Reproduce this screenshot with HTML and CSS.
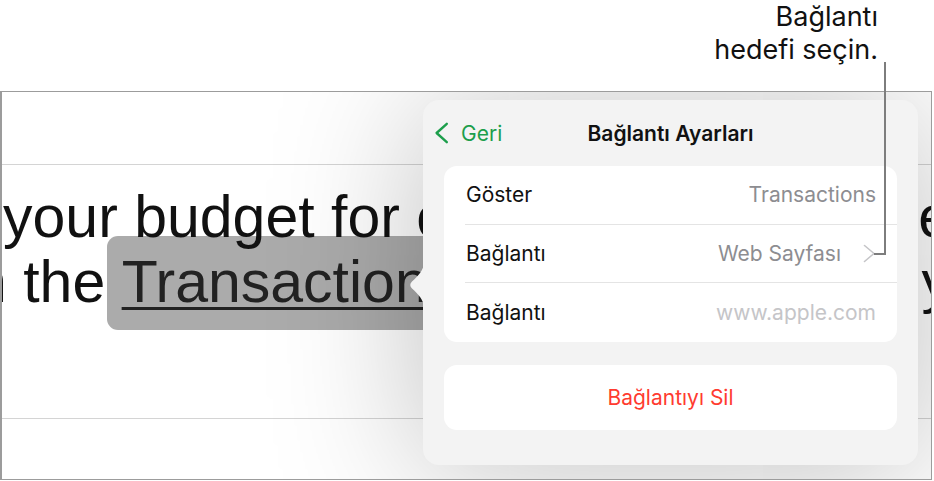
FILE: index.html
```html
<!DOCTYPE html>
<html lang="tr">
<head>
<meta charset="utf-8">
<title>Bağlantı Ayarları</title>
<link rel="stylesheet" href="styles.css">
</head>
<body>
<div class="callout">Bağlantı<br>hedefi seçin.</div>
<div class="leader"></div>
<div class="frame">
  <div class="toolbar"></div>
  <div class="doc">
    <div class="line line-one">
      <span class="left">your budget for c</span>
      <span class="right">e</span>
    </div>
    <div class="line line-two">
      <span class="left"><span class="cut">n</span> the <span class="sel"><span class="link">Transactions</span></span></span>
      <span class="right">y</span>
    </div>
  </div>
  <div class="spacer"></div>
  <div class="footer"></div>

  <div class="popover">
    <svg class="notch" width="16" height="46" viewBox="0 0 16 46"><path d="M16 0 C16 8 10 14 4 19.5 Q0.5 23 4 26.5 C10 32 16 38 16 46 Z" fill="#f3f3f3"/></svg>
    <div class="pop-head">
      <div class="back">
        <svg width="15" height="22" viewBox="0 0 15 22"><path d="M12.8 1.8 L2.6 11 L12.8 20.2" fill="none" stroke="#1c9e4b" stroke-width="2.4" stroke-linecap="round" stroke-linejoin="round"/></svg>
        <span>Geri</span>
      </div>
      <div class="title">Bağlantı Ayarları</div>
      <div></div>
    </div>
    <div class="card">
      <div class="row"><span class="label">Göster</span><span class="value">Transactions</span></div>
      <div class="row"><span class="label">Bağlantı</span><span class="value">Web Sayfası<svg class="chev" width="13" height="19" viewBox="0 0 13 19"><path d="M1.5 1.5 L11 9.5 L1.5 17.5" fill="none" stroke="#c5c5c8" stroke-width="1.6" stroke-linecap="round" stroke-linejoin="round"/></svg></span></div>
      <div class="row"><span class="label">Bağlantı</span><span class="value placeholder">www.apple.com</span></div>
    </div>
    <div class="card delete">Bağlantıyı Sil</div>
  </div>
</div>
</body>
</html>
```
FILE: styles.css
```css
html, body {
  margin: 0;
  padding: 0;
}
body {
  width: 934px;
  height: 481px;
  overflow: hidden;
  background: #ffffff;
  position: relative;
  font-family: "Inter", "Noto Sans", sans-serif;
}
.callout {
  height: 91px;
  box-sizing: border-box;
  padding: 0 56px 0 0;
  text-align: right;
  font-size: 27px;
  line-height: 33px;
  color: #111;
}
.leader {
  position: absolute;
  left: 874px;
  top: 62px;
  width: 10px;
  height: 191px;
  border-right: 2px solid #7d7d7d;
  border-bottom: 2px solid #7d7d7d;
  z-index: 5;
}
.frame {
  position: relative;
  width: 932px;
  height: 389px;
  box-sizing: border-box;
  border: 1px solid #9c9c9c;
  border-left-width: 2px;
  overflow: hidden;
  display: flex;
  flex-direction: column;
  background: #fff;
}
.toolbar {
  height: 73px;
  flex: none;
  box-sizing: border-box;
  border-bottom: 1px solid #d4d4d4;
}
.doc {
  margin-top: 20px;
  font-family: "Liberation Sans", Arial, sans-serif;
  font-size: 59px;
  line-height: 65px;
  color: #111;
}
.line {
  display: flex;
  justify-content: space-between;
  white-space: nowrap;
}
.line-one {
  position: relative;
  z-index: 1;
}
.line-one .left {
  padding-left: 1px;
}
.right {
  margin-right: -20px;
}
.cut {
  margin-left: -28px;
}
.sel {
  display: inline-block;
  line-height: 65px;
  margin-left: -15px;
  padding: 14px 40px 15px 15px;
  margin-top: -14px;
  background: #ababab;
  border-radius: 11px;
  vertical-align: top;
}
.link {
  color: #222;
  text-decoration: underline;
  text-decoration-thickness: 3px;
  text-underline-offset: 5px;
}
.spacer {
  flex: 1;
}
.footer {
  height: 61px;
  flex: none;
  box-sizing: border-box;
  border-top: 1px solid #d4d4d4;
}
.popover {
  position: absolute;
  left: 421px;
  top: 8px;
  width: 495px;
  height: 365px;
  box-sizing: border-box;
  padding: 0 21px;
  background: #f3f3f3;
  border-radius: 16px;
  box-shadow: 0 6px 150px rgba(0, 0, 0, 0.26);
  z-index: 2;
}
.notch {
  position: absolute;
  left: -15px;
  top: 162px;
}
.pop-head {
  height: 66px;
  display: grid;
  grid-template-columns: 1fr auto 1fr;
  align-items: center;
  margin: 0 -21px;
  padding: 0 11px;
}
.back {
  display: flex;
  align-items: center;
  gap: 12px;
  color: #1c9e4b;
  font-size: 21px;
}
.back svg {
  display: block;
}
.title {
  font-size: 21px;
  font-weight: 600;
  color: #111;
}
.card {
  background: #fff;
  border-radius: 13px;
}
.row {
  height: 58.7px;
  box-sizing: border-box;
  margin-left: 21px;
  padding-right: 21px;
  display: flex;
  align-items: center;
  justify-content: space-between;
  font-size: 21px;
  border-bottom: 1px solid #e4e4e4;
}
.row:last-child {
  border-bottom: none;
}
.label {
  padding-left: 1px;
  color: #111;
}
.value {
  color: #8d8d91;
  display: flex;
  align-items: center;
}
.value.placeholder {
  color: #c5c5c8;
}
.chev {
  margin-left: 22px;
  display: block;
}
.delete {
  margin-top: 23px;
  height: 65px;
  display: flex;
  align-items: center;
  justify-content: center;
  color: #ff3b30;
  font-size: 21px;
}
```
